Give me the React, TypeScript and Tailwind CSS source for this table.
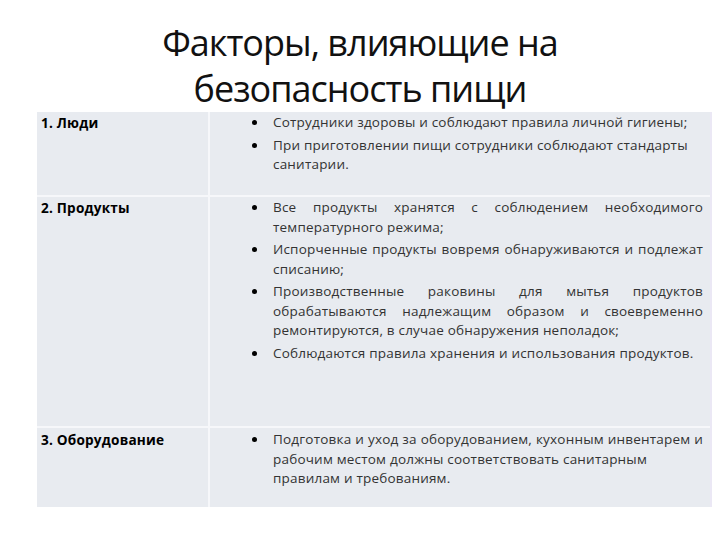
import React from 'react';

type Item = { lines: string[]; justify?: boolean[] };

const rows: { label: string; items: Item[]; h: string; pt: string }[] = [
  {
    label: '1. Люди',
    h: 'h-[83px]',
    pt: 'pt-[1px]',
    items: [
      { lines: ['Сотрудники здоровы и соблюдают правила личной гигиены;'] },
      { lines: ['При приготовлении пищи сотрудники соблюдают стандарты', 'санитарии.'] },
    ],
  },
  {
    label: '2. Продукты',
    h: 'h-[229px]',
    pt: 'pt-[1px]',
    items: [
      { lines: ['Все продукты хранятся с соблюдением необходимого', 'температурного режима;'], justify: [true] },
      { lines: ['Испорченные продукты вовремя обнаруживаются и подлежат', 'списанию;'], justify: [true] },
      {
        lines: [
          'Производственные раковины для мытья продуктов',
          'обрабатываются надлежащим образом и своевременно',
          'ремонтируются, в случае обнаружения неполадок;',
        ],
        justify: [true, true],
      },
      { lines: ['Соблюдаются правила хранения и использования продуктов.'] },
    ],
  },
  {
    label: '3. Оборудование',
    h: 'h-[79px]',
    pt: 'pt-[2px]',
    items: [
      {
        lines: [
          'Подготовка и уход за оборудованием, кухонным инвентарем и',
          'рабочим местом должны соответствовать санитарным',
          'правилам и требованиям.',
        ],
        justify: [true],
      },
    ],
  },
];

export default function App() {
  return (
    <div className="w-[720px] h-[540px] bg-white overflow-hidden font-['Open_Sans',sans-serif]">
      <h1 className="pt-[20px] text-center text-[36px] leading-[46px] text-[#111] tracking-[-1px] font-normal">
        Факторы, влияющие на
        <br />
        безопасность пищи
      </h1>

      {/* table */}
      <div className="ml-[37px] w-[675px] flex flex-col gap-[2px] bg-[#f6f7fa] border-r-2 border-[#ebe8f5]">
        {rows.map((row) => (
          <div key={row.label} className={`flex gap-[2px] ${row.h}`}>
            <div className={`w-[171px] bg-[#e8ebf0] pl-[4px] ${row.pt} text-[13.6px] leading-[19.5px] tracking-[0.2px] font-bold text-black`}>
              {row.label}
            </div>
            <div className={`flex-1 bg-[#e8ebf0] ${row.pt} pl-[42px] pr-[7px] flex flex-col gap-[3px] text-[13.5px] leading-[19.5px] tracking-[0.2px] text-[#333]`}>
              {row.items.map((item, i) => (
                <div key={i} className="flex">
                  <div className="w-[21px] shrink-0 h-[19.5px] flex items-center">
                    <span className="w-[5px] h-[5px] rounded-full bg-black" />
                  </div>
                  <div className="flex-1 min-w-0">
                    {item.lines.map((line, j) => (
                      <div
                        key={j}
                        className={`whitespace-nowrap ${item.justify?.[j] ? 'whitespace-normal text-justify [text-align-last:justify]' : ''}`}
                      >
                        {line}
                      </div>
                    ))}
                  </div>
                </div>
              ))}
            </div>
          </div>
        ))}
      </div>
    </div>
  );
}
